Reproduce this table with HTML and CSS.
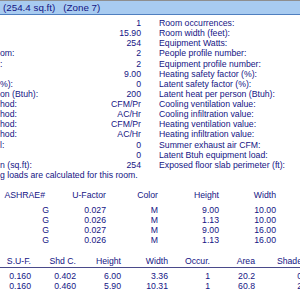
FILE: index.html
```html
<!DOCTYPE html>
<html>
<head>
<meta charset="utf-8">
<link rel="stylesheet" href="styles.css">
</head>
<body>
<div class="banner"><span>(254.4 sq.ft)</span><span class="zone">(Zone 7)</span></div>
<div class="info">
  <div class="l"><span></span><span>1</span></div><div class="r">Room occurrences:</div>
  <div class="l"><span></span><span>15.90</span></div><div class="r">Room width (feet):</div>
  <div class="l"><span></span><span>254</span></div><div class="r">Equipment Watts:</div>
  <div class="l"><span>om:</span><span>2</span></div><div class="r">People profile number:</div>
  <div class="l"><span>:</span><span>2</span></div><div class="r">Equipment profile number:</div>
  <div class="l"><span></span><span>9.00</span></div><div class="r">Heating safety factor (%):</div>
  <div class="l"><span>%):</span><span>0</span></div><div class="r">Latent safety factor (%):</div>
  <div class="l"><span>on (Btuh):</span><span>200</span></div><div class="r">Latent heat per person (Btuh):</div>
  <div class="l"><span>hod:</span><span>CFM/Pr</span></div><div class="r">Cooling ventilation value:</div>
  <div class="l"><span>hod:</span><span>AC/Hr</span></div><div class="r">Cooling infiltration value:</div>
  <div class="l"><span>hod:</span><span>CFM/Pr</span></div><div class="r">Heating ventilation value:</div>
  <div class="l"><span>hod:</span><span>AC/Hr</span></div><div class="r">Heating infiltration value:</div>
  <div class="l"><span>l:</span><span>0</span></div><div class="r">Summer exhaust air CFM:</div>
  <div class="l"><span></span><span>0</span></div><div class="r">Latent Btuh equipment load:</div>
  <div class="l"><span>n (sq.ft):</span><span>254</span></div><div class="r">Exposed floor slab perimeter (ft):</div>
</div>
<div class="note">g loads are calculated for this room.</div>
<div class="grid t1">
  <div class="h first">ASHRAE#</div><div class="h">U-Factor</div><div class="h">Color</div><div class="h">Height</div><div class="h">Width</div>
</div>
<div class="grid t1 body1">
  <div>G</div><div>0.027</div><div>M</div><div>9.00</div><div>10.00</div>
  <div>G</div><div>0.026</div><div>M</div><div>1.13</div><div>10.00</div>
  <div>G</div><div>0.027</div><div>M</div><div>9.00</div><div>16.00</div>
  <div>G</div><div>0.026</div><div>M</div><div>1.13</div><div>16.00</div>
</div>
<div class="grid t2 head2">
  <div class="h">S.U-F.</div><div class="h">Shd C.</div><div class="h">Height</div><div class="h">Width</div><div class="h">Occur.</div><div class="h">Area</div><div class="h">Shade</div>
</div>
<div class="grid t2 body2">
  <div>0.160</div><div>0.402</div><div>6.00</div><div>3.36</div><div>1</div><div>20.2</div><div>0</div>
  <div>0.160</div><div>0.460</div><div>5.90</div><div>10.31</div><div>1</div><div>60.8</div><div>2</div>
</div>
</body>
</html>
```
FILE: styles.css
```css
html, body {
  margin: 0;
  padding: 0;
  overflow: hidden;
  background: #ffffff;
}
body {
  width: 300px;
  height: 300px;
  font-family: "Liberation Sans", Arial, sans-serif;
  font-size: 8.7px;
  color: #141484;
}
.banner {
  height: 13px;
  line-height: 13px;
  border-top: 1px solid #8e8e8e;
  border-bottom: 1px solid #4f7fbf;
  background: #a8cbf0;
  font-size: 9.8px;
  padding-left: 3px;
  white-space: nowrap;
}
.banner .zone {
  margin-left: 8px;
}
.info {
  display: grid;
  grid-template-columns: 141px 159px;
  grid-auto-rows: 10.14px;
  line-height: 10.14px;
  margin-top: 3px;
  white-space: nowrap;
}
.l {
  display: flex;
  justify-content: space-between;
}
.r {
  padding-left: 18px;
}
.note {
  line-height: 11px;
  white-space: nowrap;
}
.grid {
  display: grid;
  white-space: nowrap;
  text-align: right;
  line-height: 10px;
}
.t1 {
  grid-template-columns: 49px 57px 52px 61px 57px;
  margin-top: 9px;
}
.t1 .first {
  padding-right: 4px;
}
.body1 {
  margin-top: 5px;
}
.t2 {
  grid-template-columns: 31px 45px 45px 47px 42px 45px 47px;
  width: 302px;
}
.head2 {
  margin-top: 11px;
  padding-bottom: 1px;
  border-bottom: 1px solid #4a4a8a;
}
.body2 {
  margin-top: 3px;
}
```
